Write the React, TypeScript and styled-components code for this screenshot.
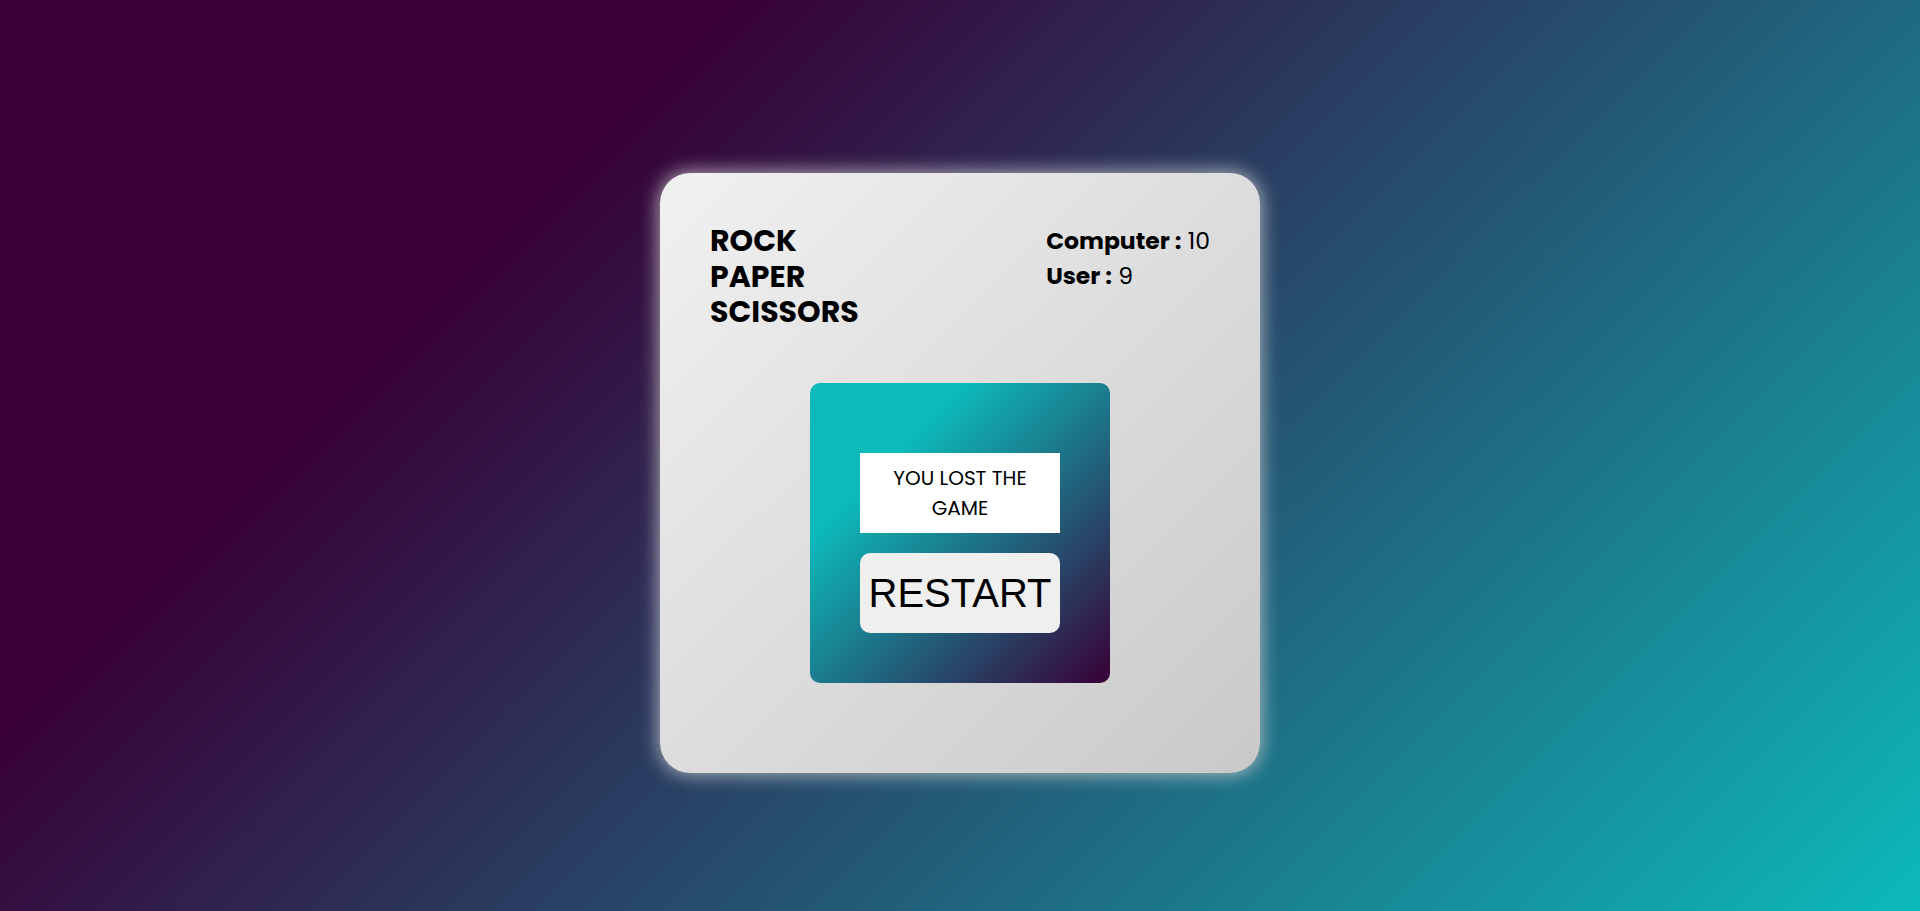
import React from "react";
import styled, { createGlobalStyle } from "styled-components";

const GlobalStyle = createGlobalStyle`
  html, body {
    margin: 0;
    padding: 0;
  }
  body {
    font-family: "Poppins", "DejaVu Sans", sans-serif;
  }
`;

const Page = styled.main`
  min-height: 100vh;
  box-sizing: border-box;
  display: flex;
  flex-direction: column;
  align-items: center;
  padding-top: 173px;
  background-image: linear-gradient(315deg, #0cbaba 0%, #380036 74%);
`;

const Card = styled.section`
  width: 600px;
  height: 600px;
  box-sizing: border-box;
  padding: 50px 50px;
  border-radius: 30px;
  background: linear-gradient(135deg, #f1f1f1 0%, #c9c9c9 100%);
  box-shadow: 0 0 18px 2px rgba(210, 210, 210, 0.75);
  display: flex;
  flex-direction: column;
`;

const Header = styled.header`
  display: flex;
  justify-content: space-between;
  align-items: flex-start;
`;

const Title = styled.h1`
  margin: 0;
  font-family: "Poppins", "DejaVu Sans", sans-serif;
  font-weight: 700;
  font-size: 30px;
  line-height: 35.5px;
  color: #000;
`;

const Scores = styled.div`
  margin-top: 0;
  font-family: "Poppins", "DejaVu Sans", sans-serif;
  font-size: 23.5px;
  line-height: 35px;
  color: #000;
`;

const ScoreRow = styled.div`
  white-space: nowrap;
`;

const ScoreLabel = styled.span`
  font-weight: 700;
`;

const ScoreValue = styled.span`
  font-weight: 400;
`;

const Board = styled.div`
  align-self: center;
  margin-top: 53.5px;
  width: 300px;
  height: 300px;
  box-sizing: border-box;
  padding-top: 70px;
  border-radius: 10px;
  background-image: linear-gradient(315deg, #380036 0%, #0cbaba 74%);
  display: flex;
  flex-direction: column;
  align-items: center;
  gap: 20px;
`;

const Message = styled.div`
  width: 200px;
  height: 80px;
  box-sizing: border-box;
  padding: 10px 20px;
  background: #ffffff;
  text-align: center;
  font-family: "Poppins", "DejaVu Sans", sans-serif;
  font-size: 20px;
  line-height: 30px;
  color: #000;
`;

const RestartButton = styled.button`
  width: 200px;
  height: 80px;
  border: none;
  border-radius: 10px;
  background: #efefef;
  padding: 1px 6px;
  font-family: "Liberation Sans", Arial, sans-serif;
  font-size: 40px;
  color: #000;
  cursor: pointer;
`;

export default function App() {
  return (
    <>
      <GlobalStyle />
      <Page>
        <Card>
          <Header>
            <Title>
              ROCK
              <br />
              PAPER
              <br />
              SCISSORS
            </Title>
            <Scores>
              <ScoreRow>
                <ScoreLabel>Computer :</ScoreLabel> <ScoreValue>10</ScoreValue>
              </ScoreRow>
              <ScoreRow>
                <ScoreLabel>User :</ScoreLabel> <ScoreValue>9</ScoreValue>
              </ScoreRow>
            </Scores>
          </Header>
          <Board>
            <Message>YOU LOST THE GAME</Message>
            <RestartButton>RESTART</RestartButton>
          </Board>
        </Card>
      </Page>
    </>
  );
}
